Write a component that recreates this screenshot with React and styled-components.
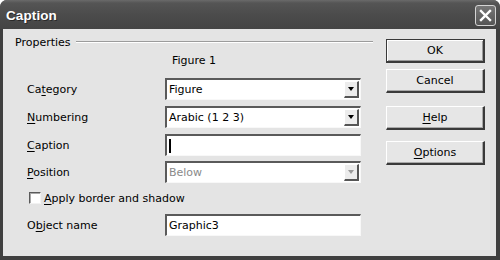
import React from "react";
import styled, { createGlobalStyle } from "styled-components";

const Global = createGlobalStyle`
  html, body { margin: 0; padding: 0; background: #ffffff; }
  body { font-family: "DejaVu Sans", "Liberation Sans", sans-serif; }
`;

const Window = styled.div`
  width: 500px;
  height: 260px;
  display: flex;
  flex-direction: column;
  background: #3f3f3f;
  border-radius: 7px 7px 0 0;
  overflow: hidden;
  box-sizing: border-box;
`;

const TitleBar = styled.div`
  height: 29px;
  flex: none;
  display: flex;
  align-items: center;
  justify-content: space-between;
  padding: 0 4px 0 6px;
  background: linear-gradient(#6a6a6a 0px, #555555 3px, #4c4c4c 14px, #444444 29px);
`;

const Title = styled.span`
  color: #ffffff;
  font-family: "Liberation Sans", "DejaVu Sans", sans-serif;
  font-weight: bold;
  font-size: 13.5px;
  letter-spacing: 0.1px;
  text-shadow: 1px 1px 0 #2a2a2a;
  padding-top: 1px;
`;

const CloseButton = styled.div`
  width: 19px;
  height: 19px;
  margin-top: 2px;
  border: 1px solid #d4d4d4;
  border-radius: 3px;
  background: linear-gradient(#767676, #555555);
  display: flex;
  align-items: center;
  justify-content: center;
`;

const Body = styled.div`
  flex: 1;
  margin: 0 4px 4px 3px;
  background: #e4e4e4;
  display: flex;
  padding: 0 11px 0 12px;
  color: #000;
  font-size: 11px;
`;

const LeftCol = styled.div`
  width: 358px;
  display: flex;
  flex-direction: column;
`;

const Header = styled.div`
  margin-top: 6px;
  height: 14px;
  display: flex;
  align-items: center;
`;

const HeaderLine = styled.div`
  flex: 1;
  margin-left: 5px;
  border-top: 1px solid #9c9c9c;
  border-bottom: 1px solid #ffffff;
`;

const Caption = styled.div`
  margin-top: 4px;
  height: 16px;
  line-height: 16px;
  text-align: center;
`;

const Row = styled.div`
  display: flex;
  align-items: center;
  height: ${(p) => p.$h || 22}px;
  margin-top: ${(p) => p.$mt || 0}px;
  padding-left: 12px;
`;

const Label = styled.div`
  width: 138px;
  flex: none;
`;

const Field = styled.div`
  width: 196px;
  height: 22px;
  box-sizing: border-box;
  display: flex;
  align-items: center;
  background: #ffffff;
  border-top: 2px solid #5a5a5a;
  border-left: 2px solid #5a5a5a;
  border-right: 1px solid #f8f8f8;
  border-bottom: 1px solid #f8f8f8;
  padding-left: 2px;
  color: ${(p) => (p.$disabled ? "#8a8a8a" : "#000")};
`;

const FieldText = styled.span`
  flex: 1;
`;

const DropButton = styled.div`
  width: 15px;
  height: 17px;
  margin-right: 1px;
  box-sizing: border-box;
  background: #ececec;
  border-top: 1px solid #ffffff;
  border-left: 1px solid #ffffff;
  border-right: 2px solid #555555;
  border-bottom: 2px solid #555555;
  display: flex;
  align-items: center;
  justify-content: center;
`;

const Arrow = styled.div`
  width: 0;
  height: 0;
  border-left: 3.5px solid transparent;
  border-right: 3.5px solid transparent;
  border-top: 4px solid ${(p) => (p.$disabled ? "#9a9a9a" : "#000")};
`;

const Caret = styled.div`
  width: 2px;
  height: 14px;
  background: #000;
`;

const CheckRow = styled.div`
  display: flex;
  align-items: center;
  height: 16px;
  margin-top: 7px;
  padding-left: 14px;
  gap: 3px;
`;

const CheckBox = styled.div`
  width: 12px;
  height: 12px;
  box-sizing: border-box;
  background: #ffffff;
  border-top: 1px solid #5a5a5a;
  border-left: 1px solid #5a5a5a;
  border-right: 1px solid #f2f2f2;
  border-bottom: 1px solid #f2f2f2;
  box-shadow: inset 1px 1px 0 #a8a8a8;
`;

const U = styled.span`
  text-decoration: underline;
  text-underline-offset: 2px;
`;

const RightCol = styled.div`
  margin-left: 13px;
  width: 99px;
  display: flex;
  flex-direction: column;
  padding-top: 10px;
`;

const Button = styled.div`
  height: 24px;
  box-sizing: border-box;
  margin-top: ${(p) => p.$mt || 0}px;
  display: flex;
  align-items: center;
  justify-content: center;
  background: #e6e6e6;
  border-top: 1px solid ${(p) => (p.$default ? "#3a3a3a" : "#ffffff")};
  border-left: 1px solid ${(p) => (p.$default ? "#3a3a3a" : "#ffffff")};
  border-right: 2px solid #3a3a3a;
  border-bottom: 2px solid #3a3a3a;
  box-shadow: ${(p) => (p.$default ? "inset 1px 1px 0 #ffffff, inset -1px -1px 0 #9a9a9a" : "inset -1px -1px 0 #a8a8a8")};
`;

function Select({ value, disabled }) {
  return (
    <Field $disabled={disabled}>
      <FieldText>{value}</FieldText>
      <DropButton>
        <Arrow $disabled={disabled} />
      </DropButton>
    </Field>
  );
}

export default function App() {
  return (
    <>
      <Global />
      <Window>
        <TitleBar>
          <Title>Caption</Title>
          <CloseButton>
            <svg width="13" height="13" viewBox="0 0 13 13">
              <path d="M2 2 L11 11 M11 2 L2 11" stroke="#ffffff" strokeWidth="2.4" strokeLinecap="square" />
            </svg>
          </CloseButton>
        </TitleBar>
        <Body>
          <LeftCol>
            <Header>
              <span>Properties</span>
              <HeaderLine />
            </Header>
            <Caption>Figure 1</Caption>
            <Row $mt={9}>
              <Label>Ca<U>t</U>egory</Label>
              <Select value="Figure" />
            </Row>
            <Row $mt={6}>
              <Label><U>N</U>umbering</Label>
              <Select value="Arabic (1 2 3)" />
            </Row>
            <Row $mt={6}>
              <Label><U>C</U>aption</Label>
              <Field>
                <Caret />
              </Field>
            </Row>
            <Row $mt={5}>
              <Label><U>P</U>osition</Label>
              <Select value="Below" disabled />
            </Row>
            <CheckRow>
              <CheckBox />
              <span><U>A</U>pply border and shadow</span>
            </CheckRow>
            <Row $mt={8}>
              <Label>O<U>b</U>ject name</Label>
              <Field>
                <FieldText>Graphic3</FieldText>
              </Field>
            </Row>
          </LeftCol>
          <RightCol>
            <Button $default>OK</Button>
            <Button $mt={6}>Cancel</Button>
            <Button $mt={13}><span><U>H</U>elp</span></Button>
            <Button $mt={11}><span><U>O</U>ptions</span></Button>
          </RightCol>
        </Body>
      </Window>
    </>
  );
}
